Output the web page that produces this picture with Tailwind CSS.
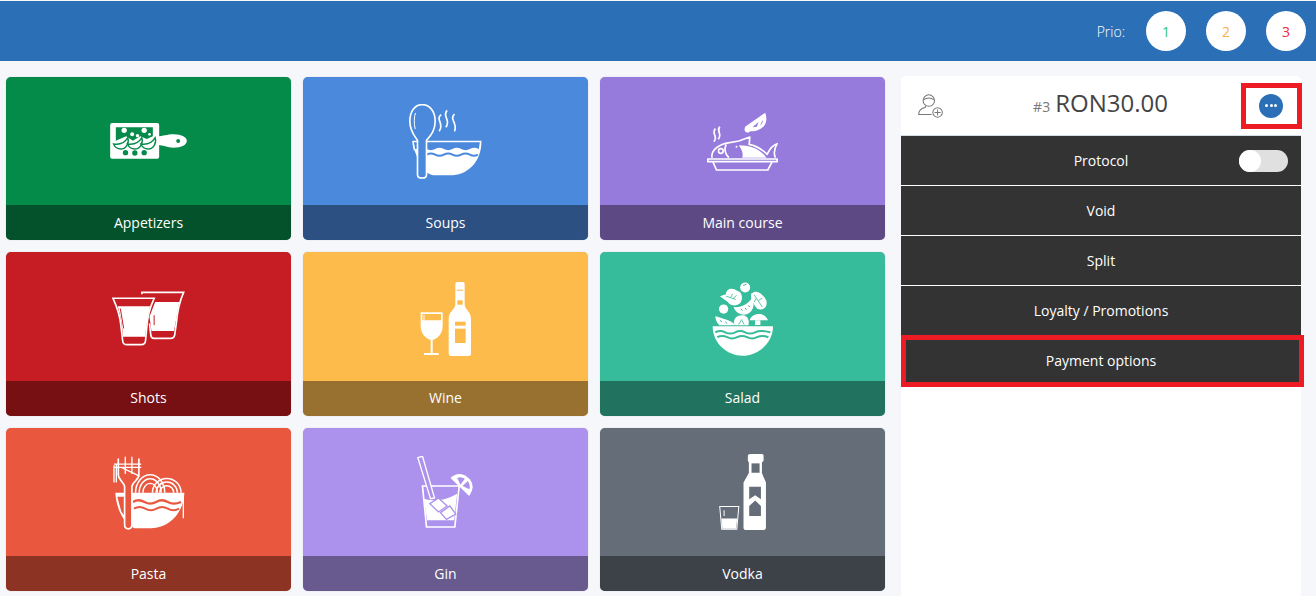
<!DOCTYPE html>
<html lang="en">
<head>
    <meta charset="UTF-8">
    <meta name="viewport" content="width=device-width, initial-scale=1.0">
    <title>Order menu</title>
    <script src="https://cdn.jsdelivr.net/npm/@tailwindcss/browser@4"></script>
</head>
<body class="h-[596px] overflow-hidden bg-[#f5f7fb] font-['Open_Sans',sans-serif]">
    <!-- top bar -->
    <header class="mt-px h-[60px] bg-[#2b70b6] flex items-center justify-end pr-[10px]">
        <span class="text-[14px] font-light text-white mr-[21px]">Prio:</span>
        <div class="flex gap-5">
            <button class="w-10 h-10 rounded-full bg-white text-[14px] text-[#2fc27c]">1</button>
            <button class="w-10 h-10 rounded-full bg-white text-[14px] text-[#f6b24a]">2</button>
            <button class="w-10 h-10 rounded-full bg-white text-[14px] text-[#ee2b3b]">3</button>
        </div>
    </header>

    <div class="flex pl-[6px]">
        <!-- categories -->
        <main class="w-[879px] mt-4 grid grid-cols-3 grid-rows-[163px_164px_163px] gap-3">
            <a class="flex flex-col rounded-[5px] overflow-hidden bg-[#058b49] shadow-[0_0_1px_rgba(0,0,0,0.3)]">
                <div class="flex-1 flex items-center justify-center">
                    <svg width="77" height="36" viewBox="330 192 230 108">
                        <rect x="330" y="192" width="147" height="107" rx="6" fill="#fff"/>
                        <path d="M470 232C490 232 500 226 520 226C545 226 560 235 560 246C560 257 545 266 520 266C500 266 490 258 470 258Z" fill="#fff"/>
                        <circle cx="534" cy="246" r="6" fill="#058b49"/>
                        <path d="M347 205H458V232L440 240L420 232L398 245L378 232L347 245Z" fill="#058b49"/>
                        <g fill="#fff">
                            <circle cx="372" cy="214" r="8"/><circle cx="396" cy="226" r="6"/><circle cx="432" cy="214" r="8"/><circle cx="412" cy="230" r="5"/><circle cx="448" cy="226" r="4"/>
                        </g>
                        <g fill="#fff" stroke="#058b49" stroke-width="4">
                            <path d="M340 255C360 258 375 250 383 236C388 252 378 270 362 270C352 270 344 264 340 255Z"/>
                            <path d="M382 255C402 258 417 250 425 236C430 252 420 270 404 270C394 270 386 264 382 255Z"/>
                            <path d="M422 255C442 258 457 250 465 236C470 252 460 270 444 270C434 270 426 264 422 255Z"/>
                        </g>
                        <g fill="#058b49">
                            <circle cx="376" cy="281" r="8"/><circle cx="404" cy="282" r="8"/><circle cx="432" cy="281" r="8"/>
                        </g>
                    </svg>
                </div>
                <div class="h-[35px] bg-[#04522b] text-white text-[14px] font-medium flex items-center justify-center">Appetizers</div>
            </a>
            <a class="flex flex-col rounded-[5px] overflow-hidden bg-[#4a89dc] shadow-[0_0_1px_rgba(0,0,0,0.3)]">
                <div class="flex-1 flex items-center justify-center">
                    <svg width="73" height="75" viewBox="328 103 218 225">
                        <path d="M337 213H545C545 280 500 317 450 317H400C370 310 342 270 337 213Z" fill="#fff"/>
                        <path d="M342 218H540L537 238Q523 231 510 238T484 238T458 238T432 238T406 238T380 238H346Z" fill="#4a89dc"/>
                        <path d="M342 238L356 272L352 290L342 262Z" fill="#4a89dc"/>
                        <path d="M380 255Q393 248 406 255T432 255T458 255T484 255T510 255T534 255" fill="none" stroke="#4a89dc" stroke-width="6"/>
                        <path d="M367 105C345 105 330 125 330 155C330 185 345 200 353 212V315Q353 325 367 325Q380 325 380 315V212C390 200 406 185 406 155C406 125 390 105 367 105Z" fill="#4a89dc" stroke="#fff" stroke-width="5"/>
                        <path d="M347 130Q340 150 346 178" fill="none" stroke="#fff" stroke-width="3"/>
                        <g fill="none" stroke="#fff" stroke-width="5">
                            <path d="M424 135C405 150 435 160 418 185"/>
                            <path d="M442 122C425 140 455 150 438 173"/>
                            <path d="M464 133C447 150 475 160 464 185"/>
                        </g>
                    </svg>
                </div>
                <div class="h-[35px] bg-[#2d5083] text-white text-[14px] font-medium flex items-center justify-center">Soups</div>
            </a>
            <a class="flex flex-col rounded-[5px] overflow-hidden bg-[#967adc] shadow-[0_0_1px_rgba(0,0,0,0.3)]">
                <div class="flex-1 flex items-center justify-center">
                    <svg width="72" height="59" viewBox="140 68 215 177">
                        <g fill="none" stroke="#fff" stroke-width="5" stroke-linejoin="round">
                            <rect x="142" y="209" width="208" height="8"/>
                            <path d="M157 217L168 242H322L335 217"/>
                            <path d="M155 205C150 190 165 170 195 162L235 155L268 143L266 165C290 170 310 185 320 195C325 185 330 170 350 163C340 180 340 195 345 205"/>
                            <circle cx="181" cy="185" r="7"/>
                            <path d="M197 165C190 180 195 195 205 205"/>
                            <path d="M165 118C150 133 175 140 160 157"/>
                            <path d="M178 112C165 127 188 132 173 150"/>
                        </g>
                        <path d="M235 168C270 168 300 180 318 205H245C250 190 242 180 235 168Z" fill="#fff"/>
                        <circle cx="228" cy="172" r="3" fill="#fff"/><circle cx="237" cy="186" r="3" fill="#967adc"/>
                        <path d="M314 70L254 112Q248 128 262 130L270 126C300 128 328 105 314 70Z" fill="#fff"/>
                        <path d="M294 98L289 112L276 114Z" fill="#967adc"/><path d="M306 92C308 98 305 104 299 109Z" fill="#967adc"/>
                    </svg>
                </div>
                <div class="h-[35px] bg-[#5d4a85] text-white text-[14px] font-medium flex items-center justify-center">Main course</div>
            </a>

            <a class="flex flex-col rounded-[5px] overflow-hidden bg-[#c51d23] shadow-[0_0_1px_rgba(0,0,0,0.3)]">
                <div class="flex-1 flex items-center justify-center pt-1">
                    <svg width="73" height="55" viewBox="65 62 220 166">
                        <path d="M155 72V66H281C270 90 263 115 259 160L254 195Q252 205 242 205H192Q183 205 182 195L178 160" fill="none" stroke="#fff" stroke-width="5"/>
                        <path d="M195 95H268C263 120 258 150 252 183H184L178 140Z" fill="#fff"/>
                        <path d="M68 84H192C180 110 172 140 170 170L166 212Q165 224 153 224H110Q98 224 97 212L92 170C90 140 80 110 68 84Z" fill="#c51d23" stroke="#fff" stroke-width="5"/>
                        <path d="M82 108H180C172 140 168 170 165 200H98C96 170 92 140 82 108Z" fill="#fff"/>
                        <path d="M90 115L100 175" stroke="#c51d23" stroke-width="3" fill="none"/>
                        <path d="M192 135V165" stroke="#c51d23" stroke-width="3" fill="none"/>
                    </svg>
                </div>
                <div class="h-[35px] pb-[2px] bg-[#771013] text-white text-[14px] font-medium flex items-center justify-center">Shots</div>
            </a>
            <a class="flex flex-col rounded-[5px] overflow-hidden bg-[#fcbb4a] shadow-[0_0_1px_rgba(0,0,0,0.3)]">
                <div class="flex-1 flex items-center justify-center pt-1">
                    <svg width="51" height="74" viewBox="60 33 153 222">
                        <path d="M172 33H188Q194 33 194 39V100C194 118 213 118 213 145V248Q213 255 206 255H153Q146 255 146 248V145C146 118 166 118 166 100V39Q166 33 172 33Z" fill="#fff"/>
                        <rect x="172" y="88" width="16" height="13" fill="#fcbb4a"/>
                        <rect x="170" y="56" width="20" height="3" fill="#fcbb4a"/>
                        <rect x="165" y="152" width="32" height="12" fill="#fcbb4a"/>
                        <rect x="165" y="173" width="32" height="43" fill="#fcbb4a"/>
                        <path d="M62 124H128V165C128 190 110 205 95 208C80 205 62 190 62 165Z" fill="#fff"/>
                        <path d="M67 129H123V148H67Z" fill="#fcbb4a"/>
                        <path d="M72 132V165" stroke="#fff" stroke-width="3"/>
                        <path d="M95 205V246M72 249H116" stroke="#fff" stroke-width="6" fill="none"/>
                    </svg>
                </div>
                <div class="h-[35px] pb-[2px] bg-[#987130] text-white text-[14px] font-medium flex items-center justify-center">Wine</div>
            </a>
            <a class="flex flex-col rounded-[5px] overflow-hidden bg-[#37bc9b] shadow-[0_0_1px_rgba(0,0,0,0.3)]">
                <div class="flex-1 flex items-center justify-center pt-1">
                    <svg width="61" height="74" viewBox="38 50 184 222">
                        <path d="M40 183H222C222 235 175 272 130 272C85 272 40 235 40 183Z" fill="#fff"/>
                        <path d="M48 201Q63 193 78 201T108 201T138 201T168 201T214 201" fill="none" stroke="#37bc9b" stroke-width="6"/>
                        <path d="M54 216Q69 208 84 216T114 216T144 216T174 216T208 216" fill="none" stroke="#37bc9b" stroke-width="6"/>
                        <path d="M62 92L80 86C80 70 100 64 114 76C130 80 132 100 124 112C112 124 92 122 86 110C78 104 70 98 62 92Z" fill="#fff"/>
                        <path d="M80 92L110 102M95 95L100 85M102 99L112 90" stroke="#37bc9b" stroke-width="2.5" fill="none"/>
                        <circle cx="138" cy="66" r="15" fill="#fff"/>
                        <path d="M132 60L142 56" stroke="#37bc9b" stroke-width="3"/>
                        <path d="M103 125C125 128 150 115 158 98C172 120 158 148 135 148C118 148 108 138 103 125Z" fill="#fff"/>
                        <path d="M125 130L130 136M138 128L142 133M148 120L152 125" stroke="#37bc9b" stroke-width="3"/>
                        <path d="M156 85C175 68 192 88 202 105C207 127 190 137 174 130C163 115 153 100 156 85Z" fill="#fff"/>
                        <path d="M165 88L190 125M178 105L190 98M172 98L165 110" stroke="#37bc9b" stroke-width="2.5" fill="none"/>
                        <circle cx="73" cy="131" r="14" fill="#fff"/>
                        <path d="M48 153C65 158 85 162 105 175V180H60C52 172 48 162 48 153Z" fill="#fff"/>
                        <path d="M62 165L68 170M78 170L84 174" stroke="#37bc9b" stroke-width="3"/>
                        <path d="M106 180C100 165 110 150 128 150C145 148 152 165 148 180Z" fill="#fff"/>
                        <path d="M118 178L128 162M135 178L128 165" stroke="#37bc9b" stroke-width="2.5" fill="none"/>
                        <path d="M152 165C155 145 195 135 207 165Z" fill="#fff"/>
                        <rect x="168" y="165" width="16" height="14" fill="#fff"/>
                    </svg>
                </div>
                <div class="h-[35px] pb-[2px] bg-[#21725e] text-white text-[14px] font-medium flex items-center justify-center">Salad</div>
            </a>

            <a class="flex flex-col rounded-[5px] overflow-hidden bg-[#e9573f] shadow-[0_0_1px_rgba(0,0,0,0.3)]">
                <div class="flex-1 flex items-center justify-center">
                    <svg width="72" height="75" viewBox="35 15 217 225">
                        <g fill="none" stroke="#fff" stroke-width="4.5">
                            <path d="M103 128A44 54 0 0 1 191 128M114 128A33 42 0 0 1 180 128M125 128A22 28 0 0 1 169 128"/>
                            <path d="M154 128A43 43 0 0 1 240 128M165 128A32 32 0 0 1 229 128M176 128A21 21 0 0 1 218 128"/>
                        </g>
                        <path d="M42 128H250C250 180 210 235 150 235H100C70 225 45 180 42 128Z" fill="#fff"/>
                        <path d="M95 156Q112 146 130 156T165 156T200 156T240 156" fill="none" stroke="#e9573f" stroke-width="7"/>
                        <path d="M98 176Q115 166 132 176T166 176T200 176T234 176" fill="none" stroke="#e9573f" stroke-width="6"/>
                        <path d="M48 140L60 185L70 198V140Z" fill="#e9573f"/>
                        <path d="M51 25V75C51 90 68 95 70 110V225Q70 237 81 237Q92 237 92 225V110C93 95 113 90 113 75V25" fill="#e9573f" stroke="#fff" stroke-width="5"/>
                        <path d="M72 20V72M92 20V72" stroke="#fff" stroke-width="4" fill="none"/>
                        <path d="M38 45V97M45 40V97M38 42H120M38 52H120M60 52L115 78" stroke="#fff" stroke-width="4" fill="none"/>
                        <path d="M247 135V205" stroke="#fff" stroke-width="4" fill="none"/>
                    </svg>
                </div>
                <div class="h-[35px] bg-[#8c3324] text-white text-[14px] font-medium flex items-center justify-center">Pasta</div>
            </a>
            <a class="flex flex-col rounded-[5px] overflow-hidden bg-[#ac92ec] shadow-[0_0_1px_rgba(0,0,0,0.3)]">
                <div class="flex-1 flex items-center justify-center">
                    <svg width="57" height="72" viewBox="52 22 170 216">
                        <path d="M68 112H178L165 235H80Z" fill="none" stroke="#fff" stroke-width="5"/>
                        <path d="M72 150Q120 165 172 135L163 215H82Z" fill="#fff"/>
                        <path d="M54 27L68 23L104 148L92 150Z" fill="#ac92ec" stroke="#fff" stroke-width="4"/>
                        <path d="M90 165L116 148L142 172L116 190Z" fill="#fff" stroke="#ac92ec" stroke-width="4"/>
                        <path d="M122 192L150 172L168 196L140 212Z" fill="#fff" stroke="#ac92ec" stroke-width="4"/>
                        <path d="M152 88Q180 62 210 92Q228 115 208 142Z" fill="#fff"/>
                        <path d="M172 88L182 108L195 90Q184 82 172 88ZM188 112L204 97Q212 108 209 122Z" fill="#ac92ec"/>
                    </svg>
                </div>
                <div class="h-[35px] bg-[#685a8f] text-white text-[14px] font-medium flex items-center justify-center">Gin</div>
            </a>
            <a class="flex flex-col rounded-[5px] overflow-hidden bg-[#656d78] shadow-[0_0_1px_rgba(0,0,0,0.3)]">
                <div class="flex-1 flex items-center justify-center">
                    <svg width="47" height="76" viewBox="57 15 140 227">
                        <path d="M150 15H185Q190 15 190 20V33Q190 38 185 40V72L197 100V235Q197 242 190 242H138Q130 242 130 235V100L146 72V40Q143 38 143 33V20Q143 15 150 15Z" fill="#fff"/>
                        <rect x="154" y="43" width="24" height="28" fill="#656d78"/>
                        <path d="M147 113H182V150L165 138L147 150Z" fill="#656d78"/>
                        <path d="M147 170L165 154L182 170V200H147Z" fill="#656d78"/>
                        <path d="M59 172H116L110 240H65Z" fill="none" stroke="#fff" stroke-width="3"/>
                        <path d="M64 208H111L108 238H67Z" fill="#fff"/>
                        <path d="M72 183V200" stroke="#fff" stroke-width="3"/>
                    </svg>
                </div>
                <div class="h-[35px] bg-[#3d4249] text-white text-[14px] font-medium flex items-center justify-center">Vodka</div>
            </a>
        </main>

        <!-- order panel -->
        <aside class="w-[400px] h-[520px] ml-4 mt-[15px] bg-white rounded-t-[5px]">
            <div class="relative h-[60px] border-b border-[#d5dde5] grid grid-cols-[1fr_auto_1fr] items-center pl-[17px] pr-[18px]">
                <svg width="26" height="25" viewBox="70 70 77 73" fill="none" stroke="#777" stroke-width="3">
                    <circle cx="102" cy="92" r="17"/>
                    <path d="M86 90Q102 78 118 90"/>
                    <path d="M92 108V112C85 114 72 116 72 133H110"/>
                    <circle cx="128" cy="127" r="14"/>
                    <path d="M128 118V136M119 127H137"/>
                </svg>
                <div class="flex items-baseline gap-[5px] mb-[5px] text-[#444]">
                    <span class="text-[14px] text-[#777]">#3</span>
                    <span class="text-[24px] leading-8">RON30.00</span>
                </div>
                <button class="justify-self-end w-6 h-6 rounded-full bg-[#2b70b6] flex items-center justify-center gap-[1.5px]">
                    <span class="w-[3px] h-[3px] rounded-full bg-white"></span>
                    <span class="w-[3px] h-[3px] rounded-full bg-white"></span>
                    <span class="w-[3px] h-[3px] rounded-full bg-white"></span>
                </button>
                <div class="absolute left-[340px] top-[7px] w-[61px] h-[46px] border-[5px] border-[#ed1c24]"></div>
            </div>
            <div class="relative h-[50px] bg-[#333] border-b border-white text-white text-[14px] font-medium flex items-center justify-center">
                Protocol
                <span class="absolute left-[338px] top-[14px] w-[49px] h-[22px] rounded-full bg-[#e0e0e0]">
                    <span class="block w-[22px] h-[22px] rounded-full bg-white"></span>
                </span>
            </div>
            <div class="h-[50px] bg-[#333] border-b border-white text-white text-[14px] font-medium flex items-center justify-center">Void</div>
            <div class="h-[50px] bg-[#333] border-b border-white text-white text-[14px] font-medium flex items-center justify-center">Split</div>
            <div class="h-[50px] bg-[#333] border-b border-white text-white text-[14px] font-medium flex items-center justify-center">Loyalty / Promotions</div>
            <div class="relative h-[50px] bg-[#333] border-b border-white text-white text-[14px] font-medium flex items-center justify-center">
                Payment options
                <div class="absolute left-0 -top-px w-[403px] h-[52px] border-[5px] border-[#ed1c24]"></div>
            </div>
        </aside>
    </div>
</body>
</html>
